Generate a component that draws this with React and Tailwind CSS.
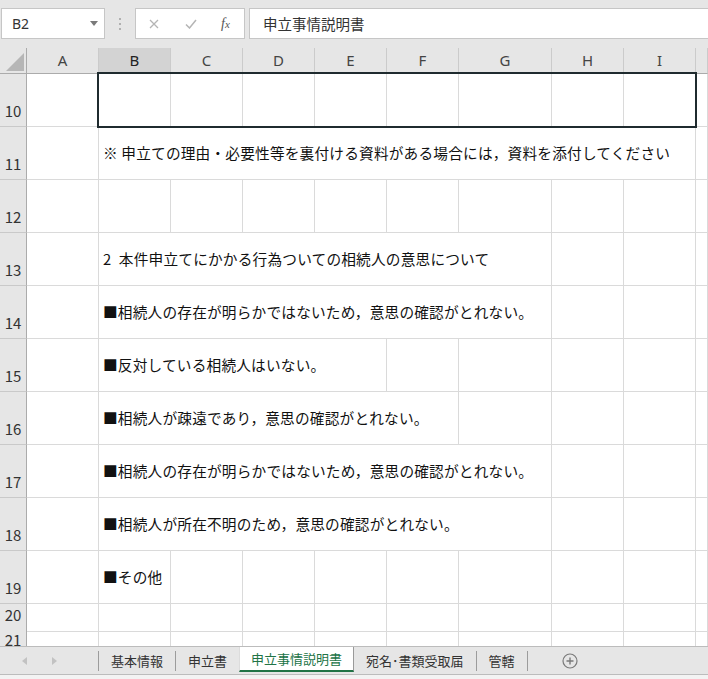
import React from 'react';

const COLS = 'grid-cols-[27px_72px_72px_72px_72px_72px_72px_93px_72px_72px_1fr]';
const SPAN = { 1: '', 4: 'col-span-4', 5: 'col-span-5', 6: 'col-span-6', 8: 'col-span-8' };
const LETTERS = ['A', 'B', 'C', 'D', 'E', 'F', 'G', 'H', 'I', ''];
const ALL = [1, 1, 1, 1, 1, 1, 1, 1, 1, 1];

const rows = [
  { n: '10', h: 'h-[53px]', box: true },
  { n: '11', h: 'h-[53px]', spans: [1, 8, 1], text: '※ 申立ての理由・必要性等を裏付ける資料がある場合には，資料を添付してください' },
  { n: '12', h: 'h-[53px]', spans: ALL },
  { n: '13', h: 'h-[53px]', spans: [1, 6, 1, 1, 1], text: '2\u2002本件申立てにかかる行為ついての相続人の意思について' },
  { n: '14', h: 'h-[53px]', spans: [1, 6, 1, 1, 1], text: '■相続人の存在が明らかではないため，意思の確認がとれない。' },
  { n: '15', h: 'h-[53px]', spans: [1, 4, 1, 1, 1, 1, 1], text: '■反対している相続人はいない。' },
  { n: '16', h: 'h-[53px]', spans: [1, 5, 1, 1, 1, 1], text: '■相続人が疎遠であり，意思の確認がとれない。' },
  { n: '17', h: 'h-[53px]', spans: [1, 6, 1, 1, 1], text: '■相続人の存在が明らかではないため，意思の確認がとれない。' },
  { n: '18', h: 'h-[53px]', spans: [1, 6, 1, 1, 1], text: '■相続人が所在不明のため，意思の確認がとれない。' },
  { n: '19', h: 'h-[53px]', spans: ALL, text: '■その他' },
  { n: '20', h: 'h-[25px]', spans: ALL },
  { n: '21', h: 'h-[25px]', spans: ALL },
];

const cell = 'border-r border-b border-[#dadada] flex items-center pl-[4px] whitespace-nowrap';
const rowHead = 'bg-[#e6e6e6] border-r border-[#ababab] border-b border-b-[#c9c9c9] flex items-end justify-center pb-[4px] text-[15px] text-[#333]';

function Row({ r }) {
  if (r.box) {
    return (
      <div className={`grid ${COLS} ${r.h}`}>
        <div className={rowHead}>{r.n}</div>
        <div className={cell}></div>
        <div className="col-span-8 relative grid grid-cols-[72px_72px_72px_72px_72px_93px_72px_72px]">
          {[0, 1, 2, 3, 4, 5, 6, 7].map((i) => (
            <div key={i} className={cell}></div>
          ))}
          <div className="absolute -left-[2px] -top-[2px] -right-[1px] -bottom-[1px] border-2 border-[#1f2b2f] z-10"></div>
        </div>
        <div className={cell}></div>
      </div>
    );
  }
  return (
    <div className={`grid ${COLS} ${r.h}`}>
      <div className={rowHead}>{r.n}</div>
      {r.spans.map((s, i) => (
        <div key={i} className={`${cell} ${SPAN[s]}`}>
          {i === 1 && r.text ? <span className="text-[14.67px] text-[#111] tracking-[0.2px]">{r.text}</span> : null}
        </div>
      ))}
    </div>
  );
}

function Tab({ label, sep = true }) {
  return (
    <div className="flex items-center">
      {sep && <span className="w-px h-[20px] bg-[#9c9c9c]"></span>}
      <span className="px-[12px] text-[13px] text-[#333]">{label}</span>
    </div>
  );
}

export default function App() {
  return (
    <div className="w-[708px] h-[679px] overflow-hidden bg-[#e6e6e6] flex flex-col font-['Noto_Sans_CJK_JP',sans-serif]">
      {/* formula bar */}
      <div className="h-[48px] shrink-0 flex items-start pt-[8px]">
        <div className="ml-[1px] w-[104px] h-[31px] bg-white border border-[#c6c6c6] flex items-center justify-between pl-[10px] pr-[6px]">
          <span className="text-[14px] text-[#333] font-['Noto_Sans',sans-serif]">B2</span>
          <svg width="8" height="5" viewBox="0 0 8 5"><path d="M0 0h8L4 5z" fill="#7a7a7a" /></svg>
        </div>
        <div className="w-[30px] h-[31px] flex flex-col items-center justify-center gap-[3px]">
          <span className="w-[2px] h-[2px] bg-[#b0b0b0]"></span>
          <span className="w-[2px] h-[2px] bg-[#b0b0b0]"></span>
          <span className="w-[2px] h-[2px] bg-[#b0b0b0]"></span>
        </div>
        <div className="w-[110px] h-[31px] bg-white border border-[#c6c6c6] flex items-center">
          <svg className="ml-[13px]" width="10" height="10" viewBox="0 0 10 10">
            <path d="M1 1l8 8M9 1l-8 8" stroke="#b5b5b5" strokeWidth="1.3" />
          </svg>
          <svg className="ml-[26px]" width="12" height="10" viewBox="0 0 12 10">
            <path d="M1 5.5l3.5 3.5L11 1" stroke="#b5b5b5" strokeWidth="1.5" fill="none" />
          </svg>
          <span className="ml-[24px] italic font-['Liberation_Serif',serif] text-[14px] text-[#555] leading-none">
            f<span className="text-[11px]">x</span>
          </span>
        </div>
        <div className="ml-[4px] flex-1 h-[31px] bg-white border border-r-0 border-[#c6c6c6] flex items-center pl-[13px]">
          <span className="text-[14.5px] text-[#333]">申立事情説明書</span>
        </div>
      </div>

      {/* sheet */}
      <div className="h-[598px] shrink-0 overflow-hidden bg-white">
        <div className={`grid ${COLS} h-[26px] bg-[#e6e6e6]`}>
          <div className="border-r border-b border-[#ababab] flex items-end justify-end pr-[2px] pb-[2px]">
            <svg width="18" height="18" viewBox="0 0 18 18"><path d="M18 0v18H0z" fill="#b6b6b6" /></svg>
          </div>
          {LETTERS.map((l) => (
            <div
              key={l || 'x'}
              className={`border-r border-[#cbcbcb] border-b flex items-center justify-center text-[15px] font-['Noto_Sans',sans-serif] ${
                l === 'B' ? 'bg-[#d3d3d3] border-b-2 border-b-[#217346] text-[#222]' : 'border-b-[#ababab] text-[#444]'
              }`}
            >
              {l}
            </div>
          ))}
        </div>
        {rows.map((r) => (
          <Row key={r.n} r={r} />
        ))}
      </div>

      {/* sheet tabs */}
      <div className="h-[29px] shrink-0 flex items-stretch border-t border-b border-[#bcbcbc] bg-[#e6e6e6]">
        <div className="w-[98px] flex items-center">
          <svg className="ml-[22px]" width="5" height="8" viewBox="0 0 5 8"><path d="M5 0v8L0 4z" fill="#c2c2c2" /></svg>
          <svg className="ml-[25px]" width="5" height="8" viewBox="0 0 5 8"><path d="M0 0v8l5-4z" fill="#c2c2c2" /></svg>
        </div>
        <Tab label="基本情報" />
        <Tab label="申立書" />
        <div className="flex items-center bg-white border-x border-l-[#dcdcdc] border-r-[#9a9a9a] border-b-2 border-b-[#217346] mb-[2px] px-[11px]">
          <span className="text-[13px] text-[#217346]">申立事情説明書</span>
        </div>
        <Tab label="宛名･書類受取届" sep={false} />
        <Tab label="管轄" />
        <div className="flex items-center">
          <span className="w-px h-[20px] bg-[#9c9c9c]"></span>
          <svg className="ml-[34px]" width="16" height="16" viewBox="0 0 16 16">
            <circle cx="8" cy="8" r="7" stroke="#7a7a7a" strokeWidth="1.2" fill="none" />
            <path d="M8 4.5v7M4.5 8h7" stroke="#7a7a7a" strokeWidth="1.4" />
          </svg>
        </div>
      </div>
      <div className="flex-1 bg-[#f3f3f3]"></div>
    </div>
  );
}
